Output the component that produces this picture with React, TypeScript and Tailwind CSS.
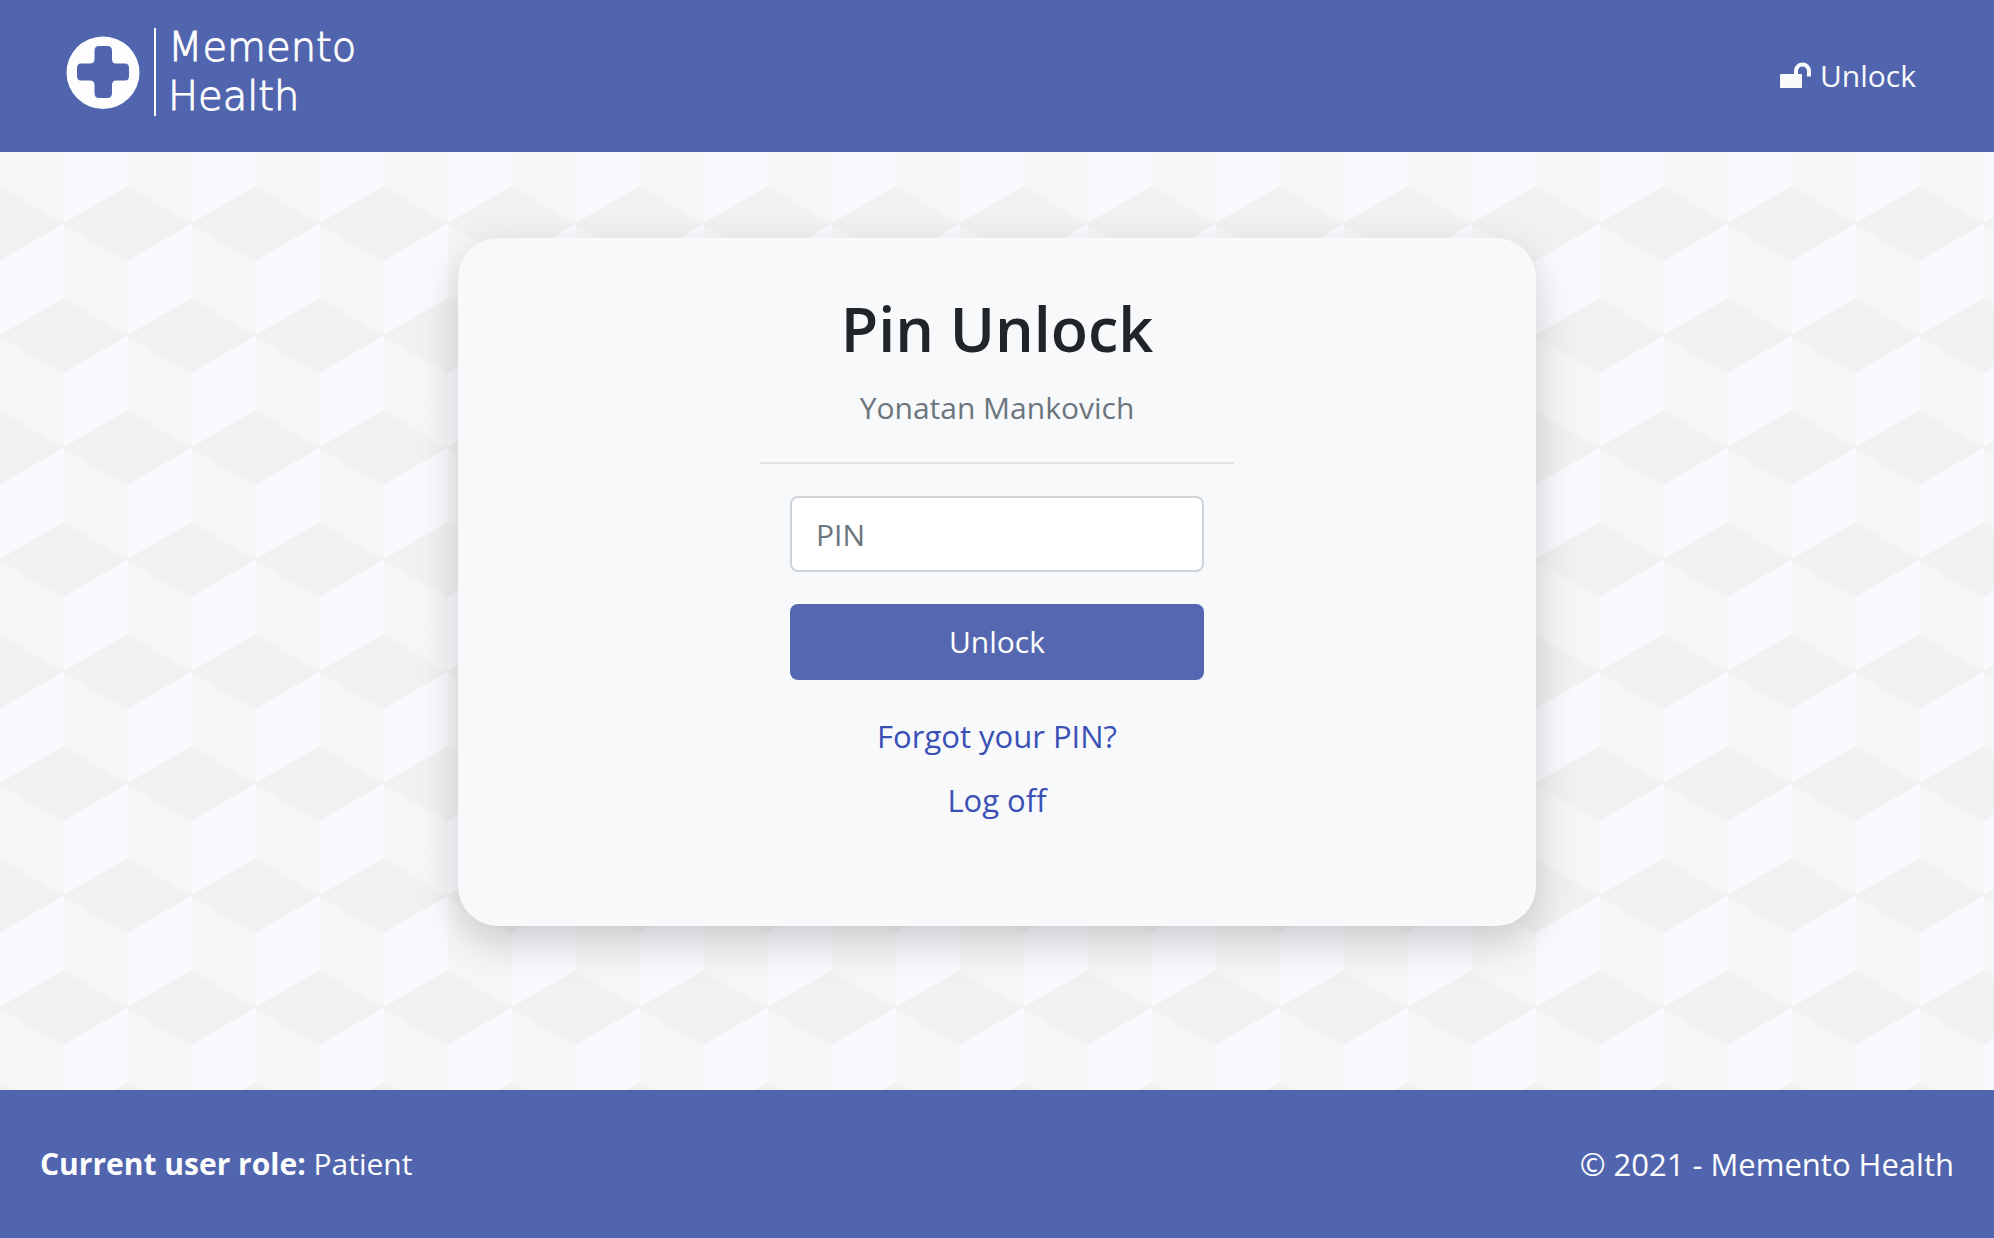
import React from "react";

const cubes = {
  backgroundColor: "#f9f9fe",
  backgroundImage: [
    "linear-gradient(30deg, #f1f1f1 12%, transparent 12.5%, transparent 87%, #f1f1f1 87.5%, #f1f1f1)",
    "linear-gradient(150deg, #f1f1f1 12%, transparent 12.5%, transparent 87%, #f1f1f1 87.5%, #f1f1f1)",
    "linear-gradient(30deg, #f1f1f1 12%, transparent 12.5%, transparent 87%, #f1f1f1 87.5%, #f1f1f1)",
    "linear-gradient(150deg, #f1f1f1 12%, transparent 12.5%, transparent 87%, #f1f1f1 87.5%, #f1f1f1)",
    "linear-gradient(60deg, #f6f6f8 25%, transparent 25.5%, transparent 75%, #f6f6f8 75%, #f6f6f8)",
    "linear-gradient(60deg, #f6f6f8 25%, transparent 25.5%, transparent 75%, #f6f6f8 75%, #f6f6f8)",
  ].join(", "),
  backgroundSize: "128px 224px",
  backgroundPosition: "0 0, 0 0, 64px 112px, 64px 112px, 0 0, 64px 112px",
};

function LogoMark() {
  return (
    <svg viewBox="0 -1 74 74" className="size-[74px]" fill="#fdfdfe" aria-hidden="true">
      <path
        fillRule="evenodd"
        d="M37 .5a36.5 36.2 0 1 1 0 72.4a36.5 36.2 0 0 1 0-72.4ZM33 10Q28.500 10 28.500 15V23Q28.500 27.500 24 27.500H15Q11 27.500 11 32V40Q11 44.500 15 44.500H24Q28.500 44.500 28.500 49V57Q28.500 62 33 62H41.500Q46 62 46 57V49Q46 44.500 50 44.500H59Q63 44.500 63 40V32Q63 27.500 59 27.500H50Q46 27.500 46 23V15Q46 10 41.500 10Z"
      />
    </svg>
  );
}

function UnlockIcon() {
  return (
    <svg viewBox="0 0 32 28" className="h-7 w-8" aria-hidden="true">
      <rect x="0" y="12" width="22" height="14" rx="1" fill="currentColor" />
      <path d="M16 13V9a6.500 6.500 0 0 1 13 0v5.500" fill="none" stroke="currentColor" strokeWidth="4" />
    </svg>
  );
}

export default function App() {
  return (
    <div
      className="flex min-h-screen flex-col font-['Open_Sans','Noto_Sans',sans-serif] text-[30px] leading-[48px] text-[#212529]"
      style={cubes}
    >
      <header className="flex h-[152px] items-center justify-between bg-[#5165ae] pr-[78px] pl-[66px]">
        <a href="#home" className="mb-2 flex items-center text-[#fdfdfe]">
          <LogoMark />
          <span className="ml-3.5 h-[88px] w-0.5 bg-[#fdfdfe]" />
          <span className="ml-3 flex flex-col font-['DejaVu_Sans',sans-serif] text-[40px] leading-[49px] font-extralight [-webkit-text-stroke:1px_currentColor]">
            <span>Memento</span>
            <span>Health</span>
          </span>
        </a>
        <a href="#unlock" className="flex items-center gap-2 text-[#f8f9fa]">
          <UnlockIcon />
          <span>Unlock</span>
        </a>
      </header>

      <main className="flex flex-1 items-start justify-center pt-[86px] pb-[164px]">
        <section className="flex w-[1078px] max-w-full flex-col items-center rounded-[40px] bg-[#f8f9fb] pt-[52px] pb-[102px] shadow-[0_16px_40px_rgba(0,0,0,0.18)]">
          <h1 className="text-[61px] leading-[78px] font-semibold">Pin Unlock</h1>
          <p className="mt-4 text-[#6c757d]">Yonatan Mankovich</p>
          <hr className="mt-[30px] w-[474px] border-t-2 border-[#dfe1e3]" />
          <form className="mt-8 flex w-[414px] flex-col gap-8" onSubmit={(e) => e.preventDefault()}>
            <input
              type="password"
              placeholder="PIN"
              aria-label="PIN"
              className="h-[76px] w-full rounded-lg border-2 border-[#ced4da] bg-white px-6 placeholder:text-[#6c757d]"
            />
            <button type="submit" className="h-[76px] w-full rounded-lg bg-[#5567b0] text-white">
              Unlock
            </button>
          </form>
          <div className="mt-8 flex flex-col items-center gap-4 text-[31px] text-[#3a50b5]">
            <a href="#forgot">Forgot your PIN?</a>
            <a href="#logoff">Log off</a>
          </div>
        </section>
      </main>

      <footer className="flex h-[148px] items-center justify-between bg-[#5165ae] px-10 text-[#fdfdfe]">
        <p>
          <strong className="font-bold">Current user role:</strong> Patient
        </p>
        <p className="text-[31px]">© 2021 - Memento Health</p>
      </footer>
    </div>
  );
}
